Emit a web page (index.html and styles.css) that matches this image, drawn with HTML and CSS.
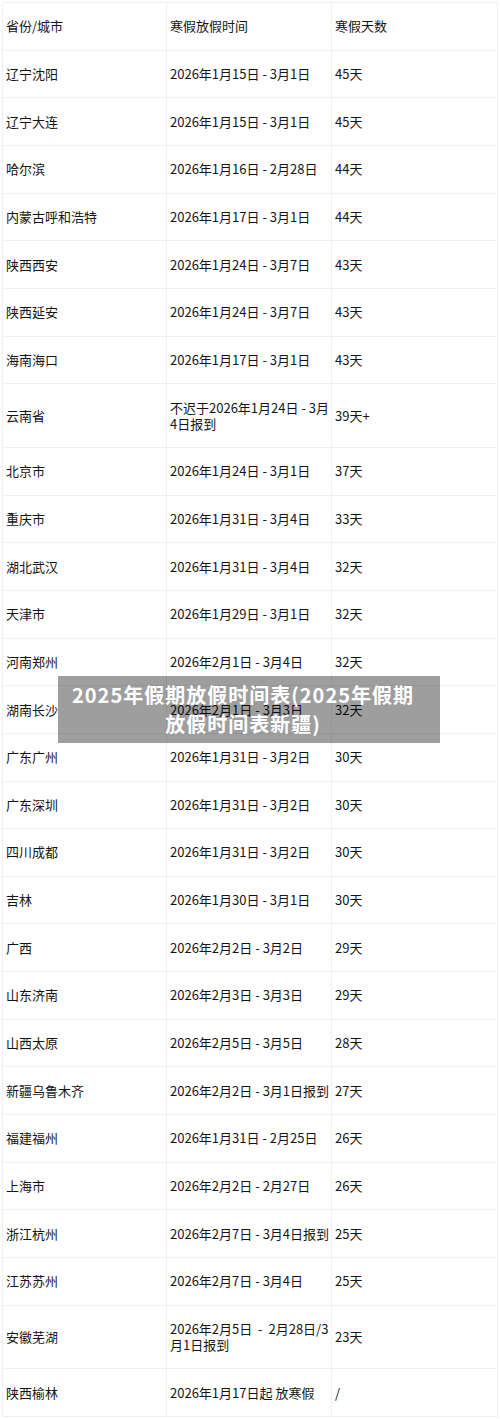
FILE: index.html
```html
<!DOCTYPE html>
<html lang="zh-CN">
<head>
<meta charset="utf-8">
<title>2025年假期放假时间表</title>
<link rel="stylesheet" href="styles.css">
</head>
<body>
<div class="page">
  <table class="holidays">
    <colgroup><col class="c1"><col class="c2"><col class="c3"></colgroup>
    <tbody>
      <tr><td>省份/城市</td><td>寒假放假时间</td><td>寒假天数</td></tr>
      <tr><td>辽宁沈阳</td><td>2026年1月15日 - 3月1日</td><td>45天</td></tr>
      <tr><td>辽宁大连</td><td>2026年1月15日 - 3月1日</td><td>45天</td></tr>
      <tr><td>哈尔滨</td><td>2026年1月16日 - 2月28日</td><td>44天</td></tr>
      <tr><td>内蒙古呼和浩特</td><td>2026年1月17日 - 3月1日</td><td>44天</td></tr>
      <tr><td>陕西西安</td><td>2026年1月24日 - 3月7日</td><td>43天</td></tr>
      <tr><td>陕西延安</td><td>2026年1月24日 - 3月7日</td><td>43天</td></tr>
      <tr><td>海南海口</td><td>2026年1月17日 - 3月1日</td><td>43天</td></tr>
      <tr><td>云南省</td><td>不迟于2026年1月24日 - 3月4日报到</td><td>39天+</td></tr>
      <tr><td>北京市</td><td>2026年1月24日 - 3月1日</td><td>37天</td></tr>
      <tr><td>重庆市</td><td>2026年1月31日 - 3月4日</td><td>33天</td></tr>
      <tr><td>湖北武汉</td><td>2026年1月31日 - 3月4日</td><td>32天</td></tr>
      <tr><td>天津市</td><td>2026年1月29日 - 3月1日</td><td>32天</td></tr>
      <tr><td>河南郑州</td><td>2026年2月1日 - 3月4日</td><td>32天</td></tr>
      <tr><td>湖南长沙</td><td>2026年2月1日 - 3月3日</td><td>32天</td></tr>
      <tr><td>广东广州</td><td>2026年1月31日 - 3月2日</td><td>30天</td></tr>
      <tr><td>广东深圳</td><td>2026年1月31日 - 3月2日</td><td>30天</td></tr>
      <tr><td>四川成都</td><td>2026年1月31日 - 3月2日</td><td>30天</td></tr>
      <tr><td>吉林</td><td>2026年1月30日 - 3月1日</td><td>30天</td></tr>
      <tr><td>广西</td><td>2026年2月2日 - 3月2日</td><td>29天</td></tr>
      <tr><td>山东济南</td><td>2026年2月3日 - 3月3日</td><td>29天</td></tr>
      <tr><td>山西太原</td><td>2026年2月5日 - 3月5日</td><td>28天</td></tr>
      <tr><td>新疆乌鲁木齐</td><td>2026年2月2日 - 3月1日报到</td><td>27天</td></tr>
      <tr><td>福建福州</td><td>2026年1月31日 - 2月25日</td><td>26天</td></tr>
      <tr><td>上海市</td><td>2026年2月2日 - 2月27日</td><td>26天</td></tr>
      <tr><td>浙江杭州</td><td>2026年2月7日 - 3月4日报到</td><td>25天</td></tr>
      <tr><td>江苏苏州</td><td>2026年2月7日 - 3月4日</td><td>25天</td></tr>
      <tr><td>安徽芜湖</td><td>2026年2月5日 &nbsp;-&nbsp; 2月28日/3月1日报到</td><td>23天</td></tr>
      <tr><td>陕西榆林</td><td>2026年1月17日起 放寒假</td><td>/</td></tr>
    </tbody>
  </table>
  <div class="title-overlay">2025年假期放假时间表(2025年假期放假时间表新疆)</div>
</div>
</body>
</html>
```
FILE: styles.css
```css
html, body {
  margin: 0;
  padding: 0;
  background: #ffffff;
}

.page {
  position: relative;
  padding: 2px 3px 2px 2px;
}

.holidays {
  width: 495px;
  border-collapse: collapse;
  table-layout: fixed;
  font-family: "Noto Sans CJK SC", "Noto Sans", sans-serif;
  font-size: 13px;
  line-height: 16px;
  color: #141414;
}

.holidays .c1 { width: 164px; }
.holidays .c2 { width: 165px; }
.holidays .c3 { width: 166px; }

.holidays td {
  border: 1px solid #f0f0f0;
  padding: 15.33px 0 15.33px 3px;
  vertical-align: middle;
  text-align: left;
  word-break: break-all;
}

.title-overlay {
  position: absolute;
  left: 58px;
  top: 676px;
  width: 382px;
  height: 67px;
  box-sizing: border-box;
  padding: 4px 22px 0 10px;
  background: rgba(0, 0, 0, 0.38);
  color: #ffffff;
  font-family: "Noto Sans CJK SC", "Noto Sans", sans-serif;
  font-weight: 700;
  font-size: 20px;
  line-height: 29px;
  letter-spacing: 1px;
  text-align: center;
}
```
